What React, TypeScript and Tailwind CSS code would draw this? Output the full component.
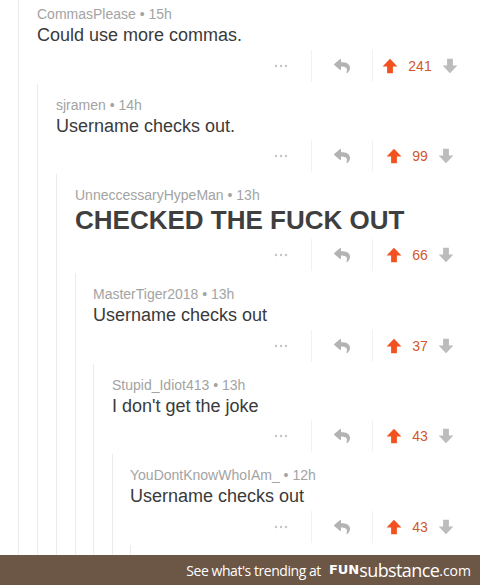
import { FaReply } from "react-icons/fa";

type Comment = {
  user: string;
  time: string;
  body: string;
  score: number;
  big?: boolean;
};

const comments: Comment[] = [
  { user: "CommasPlease", time: "15h", body: "Could use more commas.", score: 241 },
  { user: "sjramen", time: "14h", body: "Username checks out.", score: 99 },
  { user: "UnneccessaryHypeMan", time: "13h", body: "CHECKED THE FUCK OUT", score: 66, big: true },
  { user: "MasterTiger2018", time: "13h", body: "Username checks out", score: 37 },
  { user: "Stupid_Idiot413", time: "13h", body: "I don't get the joke", score: 43 },
  { user: "YouDontKnowWhoIAm_", time: "12h", body: "Username checks out", score: 43 },
];

// indent per depth (line-to-line spacing isn't perfectly even in the shot)
const indents = ["pl-[18px]", "pl-[18px]", "pl-[18px]", "pl-[17px]", "pl-[18px]", "pl-[17px]", "pl-[17px]"];

function UpArrow({ color }: { color: string }) {
  return (
    <svg width="16" height="16" viewBox="0 0 16 16">
      <path d="M8 0.8 L15.4 8.6 H10.9 V15.2 H5.1 V8.6 H0.6 Z" fill={color} />
    </svg>
  );
}

function DownArrow({ color }: { color: string }) {
  return (
    <svg width="16" height="16" viewBox="0 0 16 16">
      <path d="M8 15.2 L15.4 7.4 H10.9 V0.8 H5.1 V7.4 H0.6 Z" fill={color} />
    </svg>
  );
}

function Actions({ score }: { score: number }) {
  return (
    <div className="flex h-[28px] items-center justify-end pr-[13px] mt-[4px]">
      <div className="flex w-[60px] items-center justify-center">
        <svg width="14" height="4" viewBox="0 0 14 4">
          <circle cx="2" cy="2" r="1.2" fill="#c4c4c4" />
          <circle cx="7" cy="2" r="1.2" fill="#c4c4c4" />
          <circle cx="12" cy="2" r="1.2" fill="#c4c4c4" />
        </svg>
      </div>
      <div className="h-[32px] w-px bg-[#f1f1f1]" />
      <div className="flex w-[60px] items-center justify-center">
        <FaReply size={16} color="#b3b3b3" />
      </div>
      <div className="h-[32px] w-px bg-[#f1f1f1]" />
      <div className="flex w-[94px] items-center justify-center gap-[10px]">
        <UpArrow color="#f1521f" />
        <span className="text-[14px] leading-none text-[#d0582c]">{score}</span>
        <DownArrow color="#bcbcbc" />
      </div>
    </div>
  );
}

function Thread({ index }: { index: number }) {
  const c = comments[index];
  if (!c) {
    return <div className="h-[60px]" />;
  }
  return (
    <div className={index === 0 ? "pt-[5px]" : "pt-[12px]"}>
      <div className="text-[14px] leading-[18px] text-[#a3a3a3]">
        {c.user} • {c.time}
      </div>
      {c.big ? (
        <div className="text-[26px] leading-[33px] font-bold text-[#3f3f3f]">{c.body}</div>
      ) : (
        <div className="text-[18px] leading-[24.5px] text-[#3a3a3a]">{c.body}</div>
      )}
      <Actions score={c.score} />
      <div className={"mt-[4px] border-l border-[#ebebeb] " + indents[index + 1]}>
        <Thread index={index + 1} />
      </div>
    </div>
  );
}

export default function App() {
  return (
    <div
      className="relative h-[585px] w-[480px] overflow-hidden bg-white pl-[19px]"
      style={{ fontFamily: '"Liberation Sans", Arial, sans-serif' }}
    >
      <div className={"border-l border-[#ebebeb] " + indents[0] + " -ml-px"}>
        <Thread index={0} />
      </div>

      <div className="absolute bottom-0 left-0 right-0 flex h-[30px] items-center justify-end bg-[#6c5646] pr-[9px] text-white">
        <span
          className="text-[14px] tracking-[-0.45px] mr-[8px]"
          style={{ fontFamily: '"Open Sans", sans-serif' }}
        >
          See what's trending at
        </span>
        <span className="text-[13px] font-bold" style={{ fontFamily: '"DejaVu Sans", sans-serif' }}>
          FUN
        </span>
        <span
          className="text-[18px] leading-none tracking-[-0.6px]"
          style={{ fontFamily: '"Open Sans", sans-serif' }}
        >
          substance
        </span>
        <span className="text-[14px]" style={{ fontFamily: '"Open Sans", sans-serif' }}>
          .com
        </span>
      </div>
    </div>
  );
}
